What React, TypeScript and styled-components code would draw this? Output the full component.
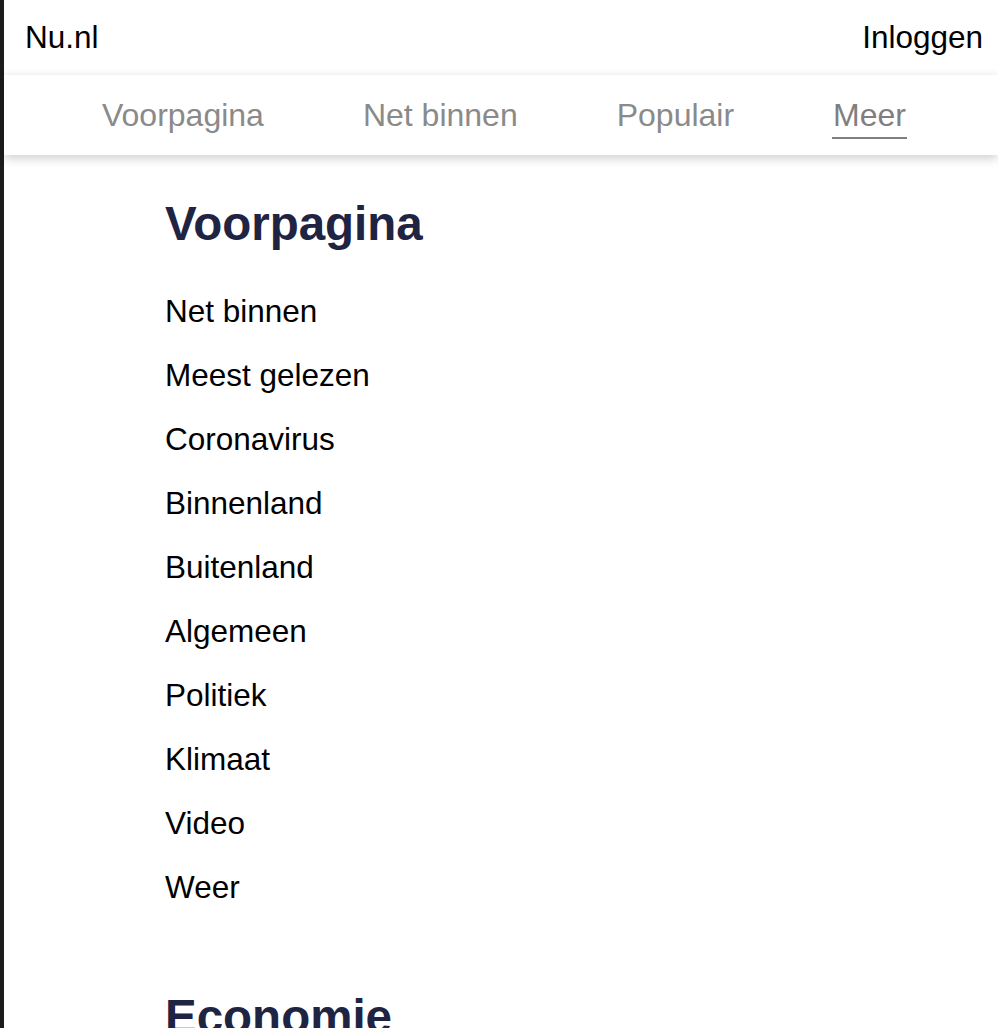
import React from "react";
import styled, { createGlobalStyle } from "styled-components";

const GlobalStyle = createGlobalStyle`
  html, body {
    margin: 0;
    padding: 0;
    background: #fff;
  }
  body {
    font-family: "Liberation Sans", Arial, Helvetica, sans-serif;
    color: #000;
  }
`;

const sections = [
  {
    title: "Voorpagina",
    items: [
      "Net binnen",
      "Meest gelezen",
      "Coronavirus",
      "Binnenland",
      "Buitenland",
      "Algemeen",
      "Politiek",
      "Klimaat",
      "Video",
      "Weer",
    ],
  },
  {
    title: "Economie",
    items: ["Net binnen", "Ondernemen", "Geldzaken", "Werk"],
  },
];

const tabs = ["Voorpagina", "Net binnen", "Populair", "Meer"];

const S = {
  Page: styled.div`
    display: flex;
    min-height: 100vh;
  `,
  Strip: styled.div`
    width: 4px;
    flex-shrink: 0;
    background: #1b1c1e;
  `,
  Main: styled.div`
    flex: 1;
    min-width: 0;
  `,
  TopBar: styled.header`
    height: 75px;
    display: flex;
    align-items: center;
    justify-content: space-between;
    padding: 0 15px 0 21px;
    font-size: 31.5px;
  `,
  Brand: styled.a`
    color: #000;
    text-decoration: none;
  `,
  Login: styled.a`
    color: #000;
    text-decoration: none;
  `,
  Nav: styled.nav`
    position: relative;
    height: 80px;
    display: flex;
    align-items: center;
    justify-content: center;
    gap: 99px;
    padding-left: 6px;
    background: #fff;
    box-shadow: 0 3px 10px rgba(0, 0, 0, 0.2);
  `,
  Tab: styled.a<{ $active?: boolean }>`
    position: relative;
    font-size: 32px;
    color: ${(p) => (p.$active ? "#7f7f7f" : "#8a8a8a")};
    text-decoration: none;

    &::after {
      content: "";
      display: ${(p) => (p.$active ? "block" : "none")};
      position: absolute;
      left: -1px;
      right: -1px;
      bottom: -5px;
      height: 2px;
      background: #808080;
    }
  `,
  Content: styled.main`
    padding: 41px 0 0 161px;
  `,
  Section: styled.section`
    margin-bottom: 84px;
  `,
  Heading: styled.h2`
    margin: 0 0 42px;
    font-size: 47.5px;
    font-weight: 700;
    color: #1f2443;
  `,
  List: styled.ul`
    list-style: none;
    margin: 0;
    padding: 0;
    display: flex;
    flex-direction: column;
    gap: 28px;
  `,
  Item: styled.li`
    font-size: 31.5px;
    line-height: 36px;
    color: #000;
  `,
};

const App = () => {
  return (
    <>
      <GlobalStyle />
      <S.Page>
        <S.Strip />
        <S.Main>
          <S.TopBar>
            <S.Brand href="#">Nu.nl</S.Brand>
            <S.Login href="#">Inloggen</S.Login>
          </S.TopBar>
          <S.Nav>
            {tabs.map((t) => (
              <S.Tab key={t} href="#" $active={t === "Meer"}>
                {t}
              </S.Tab>
            ))}
          </S.Nav>
          <S.Content>
            {sections.map((s) => (
              <S.Section key={s.title}>
                <S.Heading>{s.title}</S.Heading>
                <S.List>
                  {s.items.map((i) => (
                    <S.Item key={i}>{i}</S.Item>
                  ))}
                </S.List>
              </S.Section>
            ))}
          </S.Content>
        </S.Main>
      </S.Page>
    </>
  );
};

export default App;
